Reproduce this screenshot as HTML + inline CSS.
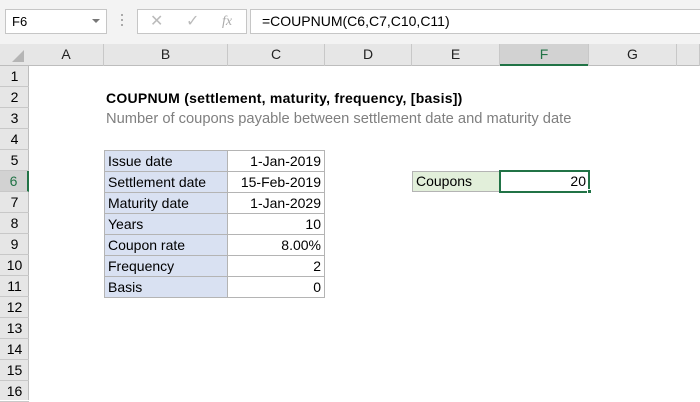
<!DOCTYPE html>
<html><head><style>
body{margin:0;width:700px;height:400px;overflow:hidden;background:#fff;font-family:"Liberation Sans",Calibri,sans-serif;position:relative}
.a{position:absolute;box-sizing:border-box}
.t{font-size:14px;line-height:21px;white-space:nowrap}
</style></head><body>
<div class="a" style="left:0;top:0;width:700px;height:44px;background:#f3f3f3"></div>
<div class="a" style="left:5px;top:9px;width:102px;height:25px;background:#fff;border:1px solid #c6c6c6"></div>
<div class="a t" style="left:12px;top:11px;font-size:13px">F6</div>
<div class="a" style="left:92px;top:19px;width:0;height:0;border-left:4px solid transparent;border-right:4px solid transparent;border-top:4px solid #777"></div>
<div class="a" style="left:121px;top:14px;width:2px;height:2px;background:#aaa;box-shadow:0 5px #aaa,0 10px #aaa"></div>
<div class="a" style="left:137px;top:9px;width:110px;height:25px;background:#fff;border:1px solid #c6c6c6"></div>
<div class="a t" style="left:150px;top:11px;color:#bbb;font-size:16px">✕</div>
<div class="a t" style="left:186px;top:11px;color:#bbb;font-size:16px">✓</div>
<div class="a t" style="left:222px;top:11px;color:#aaa;font-style:italic;font-family:'Liberation Serif',serif">fx</div>
<div class="a" style="left:250px;top:9px;width:450px;height:25px;background:#fff;border:1px solid #c6c6c6;border-right:none"></div>
<div class="a t" style="left:262px;top:11px">=COUPNUM(C6,C7,C10,C11)</div>
<div class="a" style="left:0;top:44px;width:700px;height:22px;background:#e6e6e6;border-bottom:1px solid #bdbdbd"></div>
<div class="a" style="left:0;top:66px;width:29px;height:334px;background:#e6e6e6;border-right:1px solid #bdbdbd"></div>
<div class="a" style="left:12px;top:50px;width:0;height:0;border-left:12px solid transparent;border-bottom:12px solid #b5b5b5"></div>
<div class="a" style="left:500px;top:44px;width:89px;height:22px;background:#d2d2d2;border-bottom:2px solid #217346"></div>
<div id="h"></div>
<div class="a" style="left:104px;top:150px;width:124px;height:147px;background:#d9e1f2"></div>
<div class="a" style="left:412px;top:171px;width:88px;height:21px;background:#e2efda;border:1px solid #b4b4b4"></div>
<div id="g"></div>
<div class="a t" style="left:106px;top:88px;font-weight:bold;letter-spacing:0.25px">COUPNUM (settlement, maturity, frequency, [basis])</div>
<div class="a t" style="left:106px;top:109px;color:#7f7f7f;font-size:14.7px">Number of coupons payable between settlement date and maturity date</div>
<div class="a t" style="left:416px;top:171px">Coupons</div>
<div class="a t" style="left:500px;top:171px;width:86px;text-align:right">20</div>
<div class="a" style="left:499px;top:170px;width:91px;height:23px;border:2px solid #217346"></div>
<div class="a" style="left:587px;top:189px;width:5px;height:5px;background:#217346;border:1px solid #fff"></div>
<script>
var cols=[["A",29,104],["B",104,228],["C",228,325],["D",325,412],["E",412,500],["F",500,589],["G",589,677],["",677,700]],h="";
cols.forEach(function(c){h+='<div class="a t" style="left:'+c[1]+'px;top:44px;width:'+(c[2]-c[1])+'px;height:22px;text-align:center;border-right:1px solid #c8c8c8;color:'+(c[0]=="F"?"#217346":"#222")+'">'+c[0]+'</div>';});
for(var r=1;r<=16;r++){var y=66+(r-1)*21;h+='<div class="a t" style="left:0;top:'+y+'px;width:29px;height:21px;text-align:center;border-bottom:1px solid #c8c8c8;'+(r==6?'background:#d2d2d2;color:#217346;border-right:2px solid #217346':'')+'">'+r+'</div>';}
document.getElementById("h").outerHTML=h;
var d=[["Issue date","1-Jan-2019"],["Settlement date","15-Feb-2019"],["Maturity date","1-Jan-2029"],["Years","10"],["Coupon rate","8.00%"],["Frequency","2"],["Basis","0"]],g="";
d.forEach(function(x,i){var y=150+i*21;g+='<div class="a t" style="left:104px;top:'+y+'px;width:124px;height:22px;border:1px solid #b4b4b4;padding-left:3px">'+x[0]+'</div><div class="a t" style="left:227px;top:'+y+'px;width:98px;height:22px;border:1px solid #b4b4b4;text-align:right;padding-right:3px">'+x[1]+'</div>';});
document.getElementById("g").outerHTML=g;
</script>
</body></html>
